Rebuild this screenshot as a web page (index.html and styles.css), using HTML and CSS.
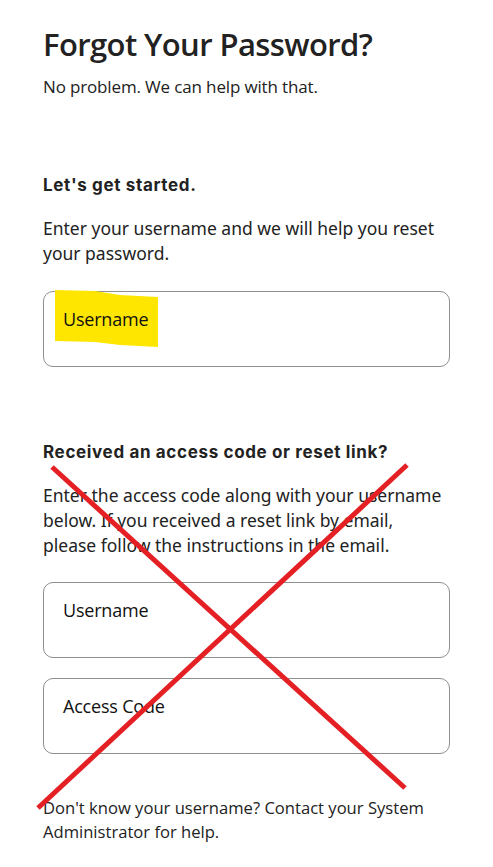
FILE: index.html
```html
<!DOCTYPE html>
<html lang="en">
<head>
<meta charset="utf-8">
<title>Forgot Your Password?</title>
<link rel="stylesheet" href="styles.css">
</head>
<body>
<main class="page">
  <h1 class="title">Forgot Your Password?</h1>
  <p class="subtitle">No problem. We can help with that.</p>

  <section class="step step-first">
    <h2 class="step-heading">Let's get started.</h2>
    <p class="step-text">Enter your username and we will help you reset your password.</p>
    <div class="field">
      <span class="highlight"><svg class="highlight-bg" viewBox="0 0 103 57" preserveAspectRatio="none"><polygon points="0,0 40,1 65,5 103,7 103,57 65,55 40,52 0,51" fill="#ffe600"/></svg></span>
      <span class="field-label">Username</span>
    </div>
  </section>

  <section class="step step-second">
    <h2 class="step-heading">Received an access code or reset link?</h2>
    <p class="step-text">Enter the access code along with your username below. If you received a reset link by email, please follow the instructions in the email.</p>
    <div class="field"><span class="field-label">Username</span></div>
    <div class="field"><span class="field-label">Access Code</span></div>
    <p class="help">Don't know your username? Contact your System Administrator for help.</p>
  </section>

  <svg class="cross" width="493" height="867" viewBox="0 0 493 867">
    <line x1="52" y1="467" x2="405" y2="788" stroke="#e42024" stroke-width="5"/>
    <line x1="407" y1="465" x2="38" y2="808" stroke="#e42024" stroke-width="5"/>
  </svg>
</main>
</body>
</html>
```

FILE: styles.css
```css
* { box-sizing: border-box; }
html, body { margin: 0; padding: 0; background: #ffffff; }
body { color: #1f1f1f; font-family: "Noto Sans", "Open Sans", sans-serif; }

.page {
  position: relative;
  width: 493px;
  min-height: 867px;
  padding: 24px 43px 0 43px;
}

.title {
  margin: 0;
  font-family: "Open Sans", sans-serif;
  font-weight: 600;
  font-size: 31px;
  line-height: 40px;
  color: #222;
  letter-spacing: -0.6px;
}

.subtitle {
  margin: 12px 0 0 0;
  font-family: "Open Sans", sans-serif;
  font-size: 17px;
  line-height: 22px;
  color: #222;
  letter-spacing: -0.15px;
}

.step { display: flex; flex-direction: column; }
.step-first { margin-top: 76px; }
.step-second { margin-top: 74px; }

.step-heading {
  margin: 0;
  font-family: Inter, "Lato", sans-serif;
  font-weight: 700;
  font-size: 17px;
  line-height: 22px;
  color: #222;
  letter-spacing: 0.65px;
}

.step-text {
  margin: 20px 0 0 0;
  font-family: "Noto Sans", sans-serif;
  font-size: 17.5px;
  line-height: 25px;
  color: #222;
}

.field {
  position: relative;
  margin-top: 25px;
  height: 76px;
  border: 1px solid #8f8f8f;
  border-radius: 10px;
  padding: 15px 19px;
}
.step-second .field + .field { margin-top: 20px; }
.step-second .step-text + .field { margin-top: 24px; }

.field-label {
  position: relative;
  font-family: "Open Sans", sans-serif;
  font-size: 18px;
  line-height: 24px;
  color: #111;
  letter-spacing: -0.2px;
}

.highlight {
  position: absolute;
  left: 11px;
  top: -2px;
  width: 103px;
  height: 57px;
}
.highlight-bg { display: block; width: 100%; height: 100%; }

.help {
  margin: 42px 0 0 0;
  font-family: "Open Sans", sans-serif;
  font-size: 16.6px;
  line-height: 24px;
  color: #222;
  letter-spacing: 0;
}

.cross {
  position: absolute;
  left: 0;
  top: 0;
  pointer-events: none;
}
```
